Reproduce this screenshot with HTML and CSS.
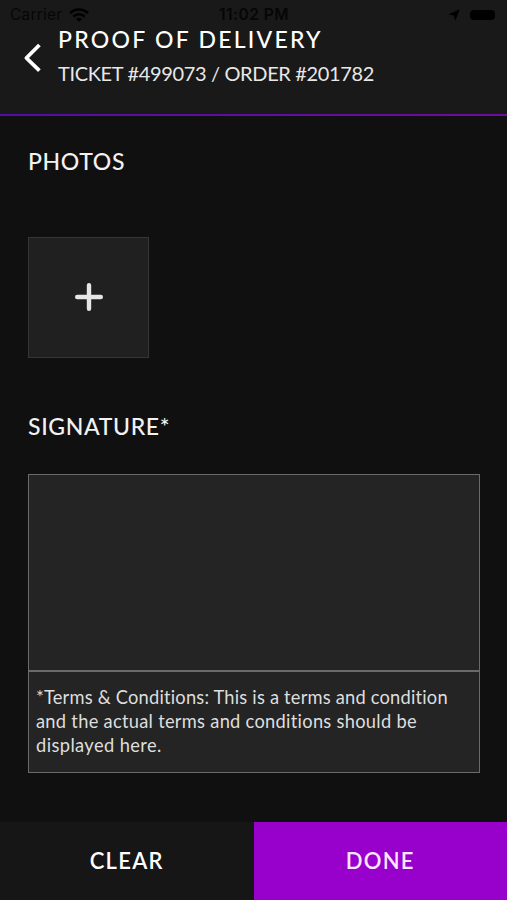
FILE: index.html
```
<!DOCTYPE html>
<html lang="en">
<head>
  <meta charset="UTF-8" />
  <title>Proof of Delivery</title>
  <link rel="stylesheet" href="styles.css">
</head>
<body>
  <div class="screen">
    <header class="header">
      <div class="status-bar">
        <div class="status-left">
          <span class="carrier">Carrier</span>
          <svg width="20" height="14" viewBox="0 0 20 14">
            <g fill="none" stroke="#000" stroke-width="2.6">
              <path d="M1 5.2 C6 0.2 14 0.2 19 5.2" />
              <path d="M4.4 8.6 C7.6 5.5 12.4 5.5 15.6 8.6" />
            </g>
            <path d="M7 10.9 C8.8 9.3 11.2 9.3 13 10.9 L10 13.8 Z" />
          </svg>
        </div>
        <span class="clock">11:02 PM</span>
        <div class="status-right">
          <svg width="12" height="12" viewBox="0 0 12 12"><path d="M11.8 0.2 L7.2 11.8 L5.8 6.6 L0.2 5.6 Z" /></svg>
          <span class="battery"></span>
        </div>
      </div>
      <div class="title-row">
        <svg class="back" width="18" height="30" viewBox="0 0 18 30">
          <path d="M16.4 2 L3.4 15 L16.4 27.6" fill="none" stroke="#fff" stroke-width="3.8" stroke-linejoin="round" />
        </svg>
        <div>
          <h1>PROOF OF DELIVERY</h1>
          <p class="ticket">TICKET #499073 / ORDER #201782</p>
        </div>
      </div>
    </header>

    <main class="content">
      <h2 class="photos-title">PHOTOS</h2>
      <div class="add-photo">
        <svg width="28" height="28" viewBox="0 0 28 28">
          <path d="M14 2.2 V25.8 M2.2 14 H25.8" stroke="#e6e6e6" stroke-width="4.4" stroke-linecap="round" />
        </svg>
      </div>
      <h2 class="signature-title">SIGNATURE*</h2>
      <div class="signature-pad"></div>
      <div class="terms">
        <span class="line l1">*Terms &amp; Conditions: This is a terms and condition</span>
        <span class="line l2">and the actual terms and conditions should be</span>
        <span class="line l3">displayed here.</span>
      </div>
    </main>

    <footer class="actions">
      <div class="btn clear">CLEAR</div>
      <div class="btn done">DONE</div>
    </footer>
  </div>
</body>
</html>
```
FILE: styles.css
```
* { box-sizing: border-box; }
body {
  margin: 0; background: #101010; color: #f2f2f2;
  font-family: Lato, "Open Sans", sans-serif;
}
h1, h2, p { margin: 0; font-weight: 500; }
svg { display: block; }
.screen {
  width: 507px; height: 900px;
  display: flex; flex-direction: column;
  overflow: hidden;
}
.header {
  height: 116px; flex: none;
  background: #191919;
  border-bottom: 2px solid;
  border-image: linear-gradient(90deg, #510fa6, #6e0d9c) 1;
}
.status-bar {
  display: grid; grid-template-columns: 1fr auto 1fr; align-items: center;
  height: 27px; padding: 3px 12px 0 13px;
  font-family: Inter, sans-serif; font-size: 15.5px; line-height: 20px;
  color: #060606;
}
.status-left, .status-right { display: flex; align-items: center; }
.status-left { gap: 7px; margin-left: -3px; }
.carrier { letter-spacing: 0.2px; }
.status-right { justify-content: flex-end; gap: 10px; }
.clock { font-weight: 600; font-size: 15.5px; letter-spacing: 0.5px; }
.battery {
  width: 25px; height: 10px;
  border-radius: 4px; background: #000;
}
.title-row { display: flex; padding-left: 23px; }
.back { margin: 16px 17px 0 0; }
h1 {
  font-size: 23px; line-height: 24px; letter-spacing: 2.25px;
  color: #fff; white-space: nowrap;
}
.ticket {
  margin-top: 10px; font-size: 20px; line-height: 24px; letter-spacing: -0.35px;
  font-weight: 400; color: #e8e8e8; white-space: nowrap;
}
.content { flex: 1; padding: 0 27px 0 28px; }
h2 { font-size: 23px; line-height: 28px; letter-spacing: 0.65px; }
.photos-title { margin-top: 31px; }
.add-photo {
  display: flex; align-items: center; justify-content: center;
  width: 121px; height: 121px; margin-top: 62px; padding-bottom: 1px;
  background: #202020; border: 1px solid #363636;
}
.signature-title { margin-top: 54px; }
.signature-pad {
  height: 197px; margin-top: 34px;
  background: #242424; border: 1px solid #6a6a6a;
}
.terms {
  height: 102px; padding: 13px 0 0 7px;
  background: #242424; border: 1px solid #6a6a6a;
  font-size: 18.3px; line-height: 24.2px; color: #dedede;
}
.line { display: block; white-space: nowrap; }
.l1 { letter-spacing: 0.2px; }
.l2 { letter-spacing: 0.28px; }
.l3 { letter-spacing: 0.4px; }
.actions { display: flex; height: 78px; flex: none; }
.btn {
  flex: 1; display: flex; align-items: center; justify-content: center;
  padding-bottom: 2px;
  font-size: 22px; font-weight: 600; letter-spacing: 1.3px; color: #fff;
}
.clear { background: #161616; }
.done { background: #9800cb; color: #f9e6ff; }
```
